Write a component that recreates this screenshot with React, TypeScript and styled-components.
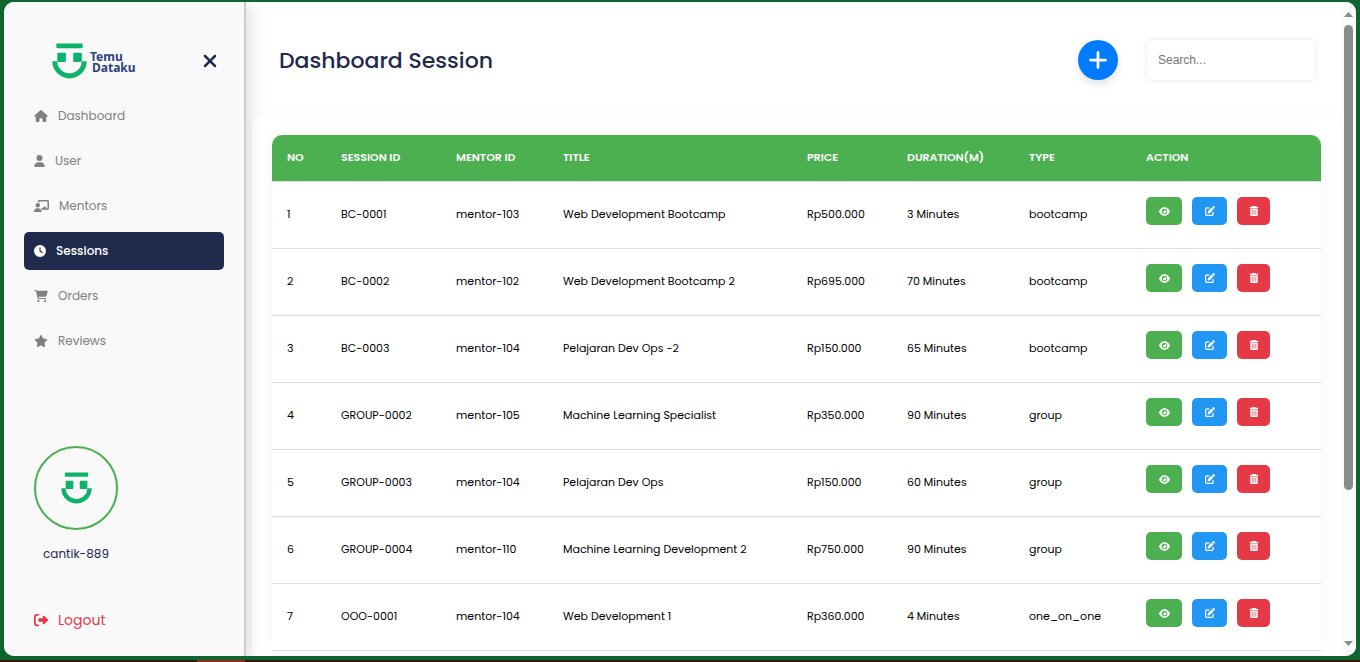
import React from "react";
import styled, { createGlobalStyle } from "styled-components";
import type { IconType } from "react-icons";
import {
  FaHouse, FaUser, FaChalkboardUser, FaClock, FaCartShopping, FaStar,
  FaXmark, FaPlus, FaEye, FaTrashCan, FaPenToSquare, FaRightFromBracket,
} from "react-icons/fa6";

const sans = `Poppins, Inter, "Open Sans", "Liberation Sans", sans-serif`;

const GlobalStyle = createGlobalStyle`
  * { box-sizing: border-box; }
  body { margin: 0; background: #0d622e; font-family: ${sans}; }
  button { font-family: inherit; cursor: pointer; }
`;

const Shell = styled.div`
  display: flex;
  flex-direction: column;
  height: 100vh;
  padding-top: 2px;
  background: #0f6430;
`;

const Frame = styled.div`
  flex: 1;
  min-height: 0;
  display: flex;
  margin: 0 4px 4px;
  border-radius: 10px;
  overflow: hidden;
  background: #fff;
`;

const Taskbar = styled.div`
  display: flex;
  height: 2px;
  padding-left: 197px;
  background: #35180a;
`;

const TaskbarItem = styled.span`
  width: 48px;
  background: #8c2d18;
`;

const Sidebar = styled.aside`
  flex: none;
  width: 242px;
  display: flex;
  flex-direction: column;
  padding: 39px 20px 20px;
  background: #f9f9f9;
  border-right: 2px solid #ccc;
  box-shadow: 4px 4px 16px rgba(0, 0, 0, 0.14);
`;

const Brand = styled.div`
  display: flex;
  align-items: center;
  justify-content: space-between;
  height: 40px;
  padding: 0 4px 0 28px;
`;

const CloseButton = styled.button`
  display: flex;
  padding: 0;
  border: 0;
  background: none;
  color: #1f2a4d;
`;

const Nav = styled.nav`
  display: flex;
  flex-direction: column;
  gap: 7px;
  margin-top: 16px;
`;

const NavLink = styled.a<{ $active?: boolean }>`
  display: flex;
  align-items: center;
  gap: 10px;
  height: 38px;
  padding: 0 10px;
  border-radius: 5px;
  font-size: 12px;
  font-weight: ${(p) => (p.$active ? 500 : 400)};
  text-decoration: none;
  color: ${(p) => (p.$active ? "#fff" : "#808080")};
  background: ${(p) => (p.$active ? "#1f2a4d" : "transparent")};
`;

const Glyph = styled.span<{ $w: number; $h: number }>`
  display: flex;
  width: ${(p) => p.$w}px;
  svg { width: ${(p) => p.$w}px; height: ${(p) => p.$h}px; }
`;

const Account = styled.div`
  display: flex;
  flex-direction: column;
  align-items: center;
  align-self: flex-start;
  gap: 14px;
  margin: auto 0 45px 10px;
  font-size: 12px;
  line-height: 20px;
  color: #1f2a4d;
`;

const Avatar = styled.div`
  display: flex;
  align-items: center;
  justify-content: center;
  width: 84px;
  height: 84px;
  border: 2px solid #4caf50;
  border-radius: 50%;
`;

const Logout = styled.a`
  display: flex;
  align-items: center;
  gap: 10px;
  padding: 0 10px;
  font-size: 14px;
  line-height: 22px;
  margin-bottom: 5px;
  color: #e63946;
  text-decoration: none;
`;

const Main = styled.main`
  flex: 1;
  min-width: 0;
  display: flex;
  flex-direction: column;
  overflow: hidden;
`;

const Header = styled.header`
  flex: none;
  display: flex;
  align-items: center;
  height: 113px;
  padding: 3px 26px 0 33px;
`;

const Title = styled.h1`
  flex: 1;
  margin: 0;
  font-size: 22px;
  font-weight: 500;
  color: #1f2a4d;
`;

const AddButton = styled.button`
  display: flex;
  align-items: center;
  justify-content: center;
  width: 40px;
  height: 40px;
  margin-right: 29px;
  padding: 0;
  border: 0;
  border-radius: 50%;
  background: #007bff;
  color: #fff;
  box-shadow: 0 4px 8px rgba(0, 0, 0, 0.12);
`;

const Search = styled.input`
  width: 168px;
  height: 40px;
  padding: 0 11px;
  border: 0;
  border-radius: 5px;
  background: #fff;
  font: 12px "Liberation Sans", Arial, sans-serif;
  box-shadow: 0 0 5px rgba(0, 0, 0, 0.1);
  &::placeholder { color: #757575; }
`;

const Content = styled.div`
  flex: 1;
  margin-left: 6px;
  padding: 20px;
  border-radius: 10px 10px 0 0;
  background: rgba(255, 255, 255, 0.5);
  box-shadow: 0 0 10px rgba(0, 0, 0, 0.03);
`;

const TableCard = styled.section`
  border-radius: 10px 10px 0 0;
  overflow: hidden;
  background: #fff;
  box-shadow: 0 0 16px rgba(0, 0, 0, 0.04);
`;

const Table = styled.table`
  width: 100%;
  table-layout: fixed;
  border-collapse: separate;
  border-spacing: 0;
  font-size: 11px;
  color: #000;
`;

const Th = styled.th<{ $w: number }>`
  width: ${(p) => p.$w}px;
  height: 47px;
  padding: 0 15px 2px;
  text-align: left;
  white-space: nowrap;
  font-weight: 600;
  color: #fff;
  background: #4caf50;
  border-bottom: 1px solid #ddd;
`;

const Td = styled.td`
  height: 67px;
  padding: 0 15px 2px;
  white-space: nowrap;
  border-bottom: 1px solid #ddd;
`;

const Actions = styled.div`
  display: flex;
  gap: 10px;
  padding-bottom: 6px;
`;

const ActionButton = styled.button<{ $w: number; $bg: string }>`
  display: flex;
  align-items: center;
  justify-content: center;
  width: ${(p) => p.$w}px;
  height: 28px;
  padding: 0;
  border: 0;
  border-radius: 5px;
  color: #fff;
  background: ${(p) => p.$bg};
`;

const Scrollbar = styled.div`
  flex: none;
  width: 15px;
  display: flex;
  flex-direction: column;
  align-items: center;
  padding: 10px 0;
  background: #fbfbfb;
  color: #8b8b8b;
`;

const Track = styled.div`
  flex: 1;
  width: 9px;
  margin: 8px 0;
`;

const Thumb = styled.div`
  height: 76.5%;
  border-radius: 5px;
  background: #8b8b8b;
`;

/* Smiling face mark of the brand */
const FaceShapes = () => (
  <g fill="#0eb36b">
    <rect x="4.300" y="0.600" width="26.400" height="4.600" rx="1" />
    <rect x="5.300" y="9.800" width="8.600" height="9.200" rx="1" />
    <rect x="21.200" y="9.800" width="8.600" height="9.200" rx="1" />
    <path d="M0.300 18.200h5a12.200 12.200 0 0 0 24.400 0h5a17.200 17.200 0 0 1-34.400 0z" />
  </g>
);

const Logo = () => (
  <svg width="86" height="36" viewBox="0 0 86 36" role="img" aria-label="Temu Dataku">
    <FaceShapes />
    <text fill="#2d3f7f" fontFamily='"Noto Sans", sans-serif' fontWeight="700" fontSize="12">
      <tspan x="38" y="18">Temu</tspan>
      <tspan x="40" y="29">Dataku</tspan>
    </text>
  </svg>
);

const nav: { label: string; icon: IconType; w: number; active?: boolean }[] = [
  { label: "Dashboard", icon: FaHouse, w: 14 },
  { label: "User", icon: FaUser, w: 11 },
  { label: "Mentors", icon: FaChalkboardUser, w: 15 },
  { label: "Sessions", icon: FaClock, w: 12, active: true },
  { label: "Orders", icon: FaCartShopping, w: 14 },
  { label: "Reviews", icon: FaStar, w: 14 },
];

const columns: [string, number][] = [
  ["NO", 54], ["SESSION ID", 115], ["MENTOR ID", 107], ["TITLE", 244],
  ["PRICE", 100], ["DURATION(M)", 122], ["TYPE", 117], ["ACTION", 190],
];

const sessions = [
  ["BC-0001", "mentor-103", "Web Development Bootcamp", "Rp500.000", "3 Minutes", "bootcamp"],
  ["BC-0002", "mentor-102", "Web Development Bootcamp 2", "Rp695.000", "70 Minutes", "bootcamp"],
  ["BC-0003", "mentor-104", "Pelajaran Dev Ops -2", "Rp150.000", "65 Minutes", "bootcamp"],
  ["GROUP-0002", "mentor-105", "Machine Learning Specialist", "Rp350.000", "90 Minutes", "group"],
  ["GROUP-0003", "mentor-104", "Pelajaran Dev Ops", "Rp150.000", "60 Minutes", "group"],
  ["GROUP-0004", "mentor-110", "Machine Learning Development 2", "Rp750.000", "90 Minutes", "group"],
  ["OOO-0001", "mentor-104", "Web Development 1", "Rp360.000", "4 Minutes", "one_on_one"],
];

export default function App() {
  return (
    <Shell>
      <GlobalStyle />
      <Frame>
        <Sidebar>
          <Brand>
            <Logo />
            <CloseButton aria-label="Close menu"><FaXmark size={20} /></CloseButton>
          </Brand>
          <Nav>
            {nav.map(({ label, icon: Icon, w, active }) => (
              <NavLink key={label} href="#" $active={active}>
                <Glyph $w={w} $h={12}><Icon /></Glyph>
                {label}
              </NavLink>
            ))}
          </Nav>
          <Account>
            <Avatar>
              <svg width="31" height="32" viewBox="0 0 35 36" aria-hidden="true"><FaceShapes /></svg>
            </Avatar>
            cantik-889
          </Account>
          <Logout href="#">
            <Glyph $w={14} $h={14}><FaRightFromBracket /></Glyph>
            Logout
          </Logout>
        </Sidebar>
        <Main>
          <Header>
            <Title>Dashboard Session</Title>
            <AddButton aria-label="Add session"><FaPlus size={22} /></AddButton>
            <Search type="text" placeholder="Search..." aria-label="Search sessions" />
          </Header>
          <Content>
            <TableCard>
              <Table>
                <thead>
                  <tr>
                    {columns.map(([name, w]) => <Th key={name} $w={w}>{name}</Th>)}
                  </tr>
                </thead>
                <tbody>
                  {sessions.map((row, i) => (
                    <tr key={row[0]}>
                      <Td>{i + 1}</Td>
                      {row.map((value) => <Td key={value}>{value}</Td>)}
                      <Td>
                        <Actions>
                          <ActionButton $w={36} $bg="#4caf50" aria-label="View"><FaEye size={11} /></ActionButton>
                          <ActionButton $w={35} $bg="#2196f3" aria-label="Edit"><FaPenToSquare size={10} /></ActionButton>
                          <ActionButton $w={33} $bg="#e63946" aria-label="Delete"><FaTrashCan size={10} /></ActionButton>
                        </Actions>
                      </Td>
                    </tr>
                  ))}
                </tbody>
              </Table>
            </TableCard>
          </Content>
        </Main>
        <Scrollbar aria-hidden="true">
          <svg width="9" height="5" viewBox="0 0 9 5"><path d="M4.500 0L9 5H0z" fill="currentColor" /></svg>
          <Track><Thumb /></Track>
          <svg width="9" height="5" viewBox="0 0 9 5"><path d="M4.500 5L9 0H0z" fill="currentColor" /></svg>
        </Scrollbar>
      </Frame>
      <Taskbar><TaskbarItem /></Taskbar>
    </Shell>
  );
}
